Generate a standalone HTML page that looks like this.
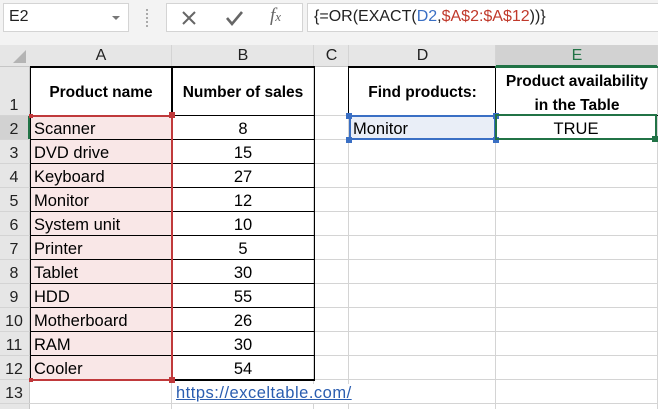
<!DOCTYPE html>
<html><head><style>
*{margin:0;padding:0;box-sizing:border-box}
body{width:658px;height:409px;overflow:hidden;background:#fff;font-family:"Liberation Sans",Calibri,sans-serif;position:relative;font-size:15px;color:#000}
.a{position:absolute}
.t{position:absolute;white-space:nowrap}
</style></head><body>
<div class="a" style="left:0;top:0;width:658px;height:45px;background:#f3f3f3"></div>
<div class="a" style="left:3px;top:3px;width:126px;height:29px;background:#fff;border:1px solid #d4d4d4"></div>
<div class="t" style="left:9px;top:8px;font-size:16px;color:#222">E2</div>
<div class="a" style="left:112px;top:16px;border-left:4px solid transparent;border-right:4px solid transparent;border-top:4px solid #777"></div>
<div class="a" style="left:146px;top:9px;width:2px;height:18px;border-left:2px dotted #aaa"></div>
<div class="a" style="left:166px;top:3px;width:137px;height:29px;background:#fff;border:1px solid #d4d4d4"></div>
<svg class="a" style="left:180px;top:9px" width="18" height="18"><path d="M3 3L15 15M15 3L3 15" stroke="#666" stroke-width="2"/></svg>
<svg class="a" style="left:224px;top:9px" width="22" height="18"><path d="M3 9L8 15L18 3" stroke="#666" stroke-width="2.6" fill="none"/></svg>
<div class="t" style="left:270px;top:5px;font-family:'Liberation Serif',serif;font-style:italic;font-size:19px;color:#666">f<span style="font-size:13px">x</span></div>
<div class="a" style="left:307px;top:3px;width:355px;height:29px;background:#fff;border:1px solid #d4d4d4"></div>
<div class="t" style="left:314px;top:8px;font-size:16px;color:#222">{=OR(EXACT(<span style="color:#3a6fc4">D2</span>,<span style="color:#c0392b">$A$2:$A$12</span>))}</div>
<div class="a" style="left:0;top:45px;width:658px;height:22px;background:#e6e6e6;border-bottom:1px solid #c6c6c6"></div>
<div class="a" style="left:496px;top:45px;width:162px;height:22px;background:#d2d2d2;border-bottom:2px solid #217346"></div>
<div class="a" style="left:0;top:67px;width:30px;height:342px;background:#e6e6e6;border-right:1px solid #c6c6c6"></div>
<div class="a" style="left:0;top:116px;width:30px;height:24px;background:#d2d2d2;border-right:2px solid #217346"></div>
<svg class="a" style="left:10px;top:48px" width="18" height="17"><path d="M16 2L16 15L3 15Z" fill="#b4b4b4"/></svg>
<div id="rows"></div>
<script>
var cx=[30,172,314,349,496,658],cn=["A","B","C","D","E"],h="";
for(var i=0;i<5;i++){h+='<div class="t" style="left:'+cx[i]+'px;top:47px;width:'+(cx[i+1]-cx[i])+'px;text-align:center;font-size:16px;color:'+(i==4?'#217346':'#222')+'">'+cn[i]+'</div>';
h+='<div class="a" style="left:'+(cx[i+1]-1)+'px;top:45px;width:1px;height:364px;background:#d4d4d4"></div>';}
var ry=[67,116];for(var r=2;r<=13;r++)ry.push(116+24*(r-1));
for(var r=1;r<=13;r++){h+='<div class="a" style="left:0;top:'+(ry[r]-1)+'px;width:658px;height:1px;background:#d4d4d4"></div>';
h+='<div class="t" style="left:0;top:'+(ry[r]-19)+'px;width:28px;text-align:center;font-size:16px;color:#222">'+r+'</div>';}
h+='<div class="a" style="left:30px;top:116px;width:142px;height:264px;background:#f9e7e7"></div>';
h+='<div class="a" style="left:349px;top:116px;width:147px;height:24px;background:#e9eef7"></div>';
var names=["Scanner","DVD drive","Keyboard","Monitor","System unit","Printer","Tablet","HDD","Motherboard","RAM","Cooler"],v=[8,15,27,12,10,5,30,55,26,30,54];
for(var k=0;k<11;k++){var y=116+24*k;
h+='<div class="t" style="left:34px;top:'+(y+4)+'px;font-size:16.5px">'+names[k]+'</div>';
h+='<div class="t" style="left:172px;top:'+(y+4)+'px;width:142px;text-align:center;font-size:16.5px">'+v[k]+'</div>';}
h+='<div class="a" style="left:30px;top:66px;width:285px;height:315px;border:1px solid #000;border-top:2px solid #000"></div>';
for(var k=0;k<=11;k++){h+='<div class="a" style="left:30px;top:'+(115+24*k)+'px;width:285px;height:1px;background:#000"></div>';}
h+='<div class="a" style="left:171px;top:67px;width:1.5px;height:313px;background:#000"></div>';
h+='<div class="a" style="left:348px;top:66px;width:310px;height:2px;background:#000"></div>';
h+='<div class="a" style="left:348px;top:66px;width:1px;height:50px;background:#000"></div>';
h+='<div class="a" style="left:495px;top:66px;width:1px;height:50px;background:#000"></div>';
h+='<div class="a" style="left:348px;top:115px;width:310px;height:1px;background:#000"></div>';
h+='<div class="a" style="left:30px;top:115px;width:143px;height:266px;border:2px solid #c0393b;border-left:none"></div>';
h+='<div class="a" style="left:169px;top:112px;width:6px;height:6px;background:#c0393b"></div>';
h+='<div class="a" style="left:169px;top:377px;width:6px;height:6px;background:#c0393b"></div>';
h+='<div class="a" style="left:29px;top:114px;width:4px;height:4px;background:#c0393b"></div>';
h+='<div class="a" style="left:29px;top:378px;width:4px;height:4px;background:#c0393b"></div>';
h+='<div class="a" style="left:349px;top:115px;width:147px;height:25px;border:2px solid #3a6fc4"></div>';
[[346,113],[493,113],[346,137],[493,137]].forEach(function(p){h+='<div class="a" style="left:'+p[0]+'px;top:'+p[1]+'px;width:6px;height:6px;background:#3a6fc4"></div>'});
h+='<div class="a" style="left:495px;top:114px;width:162px;height:26px;border:2px solid #217346"></div>';
h+='<div class="a" style="left:652px;top:136px;width:6px;height:6px;background:#217346"></div>';
h+='<div class="a" style="left:495px;top:66px;width:163px;height:2px;background:#217346"></div>';
document.getElementById("rows").outerHTML=h;
</script>
<div class="t" style="left:30px;top:84px;width:142px;text-align:center;font-weight:bold;font-size:15.5px">Product name</div>
<div class="t" style="left:172px;top:84px;width:142px;text-align:center;font-weight:bold;font-size:15.5px">Number of sales</div>
<div class="t" style="left:349px;top:84px;width:147px;text-align:center;font-weight:bold;font-size:15.5px">Find products:</div>
<div class="t" style="left:496px;top:70px;width:162px;text-align:center;font-weight:bold;font-size:15.5px;line-height:24px">Product availability<br>in the Table</div>
<div class="t" style="left:353px;top:120px;font-size:16.5px">Monitor</div>
<div class="t" style="left:496px;top:120px;width:160px;text-align:center;font-size:16.5px">TRUE</div>
<div class="t" style="left:176px;top:384px;font-size:16.5px;letter-spacing:0.5px;color:#2a5db0;text-decoration:underline;background:#fff">https://exceltable.com/</div>
</body></html>
